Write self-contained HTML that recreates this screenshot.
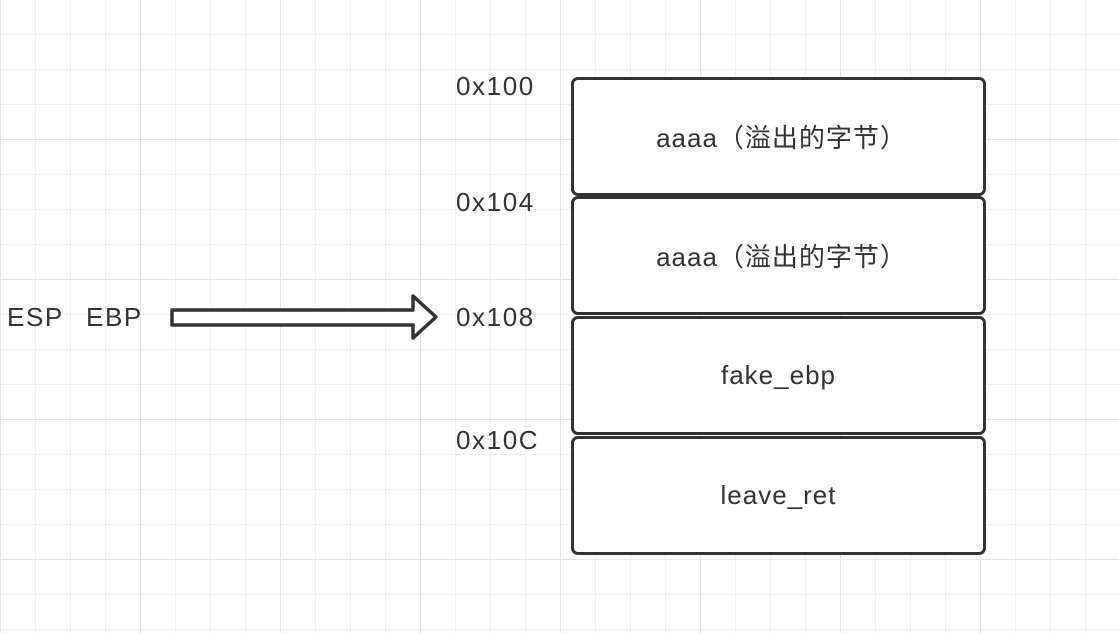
<!DOCTYPE html>
<html><head><meta charset="utf-8"><style>
html,body{margin:0;padding:0}
body{width:1119px;height:633px;overflow:hidden;background:#fff;position:relative;font-family:"Liberation Sans","Noto Sans CJK SC",sans-serif;color:#333;
background-image:
linear-gradient(#e4e4e4 1px,transparent 1px),
linear-gradient(90deg,#e4e4e4 1px,transparent 1px),
linear-gradient(#f0f0f0 1px,transparent 1px),
linear-gradient(90deg,#f0f0f0 1px,transparent 1px);
background-size:140px 140px,140px 140px,35px 35px,35px 35px;
background-position:0 -1px,0 0,0 -1px,0 0;}
.box{position:absolute;left:571px;width:409px;height:113px;border:3px solid #333;border-radius:7px;background:#fff;display:flex;align-items:center;justify-content:center;font-size:26px;color:#333;letter-spacing:1px}
.lbl{position:absolute;font-size:26px;color:#333;letter-spacing:1.6px}
</style></head><body>
<div class="lbl" style="left:456px;top:71px">0x100</div>
<div class="lbl" style="left:456px;top:187px">0x104</div>
<div class="lbl" style="left:456px;top:302px">0x108</div>
<div class="lbl" style="left:456px;top:425px">0x10C</div>
<div class="lbl" style="left:7px;top:302px">ESP</div>
<div class="lbl" style="left:86px;top:302px">EBP</div>
<div class="box" style="top:77px;padding-left:6px;box-sizing:content-box;width:403px">aaaa（溢出的字节）</div>
<div class="box" style="top:196px;padding-left:6px;box-sizing:content-box;width:403px">aaaa（溢出的字节）</div>
<div class="box" style="top:316px">fake_ebp</div>
<div class="box" style="top:436px">leave_ret</div>
<svg style="position:absolute;left:0;top:0" width="1119" height="633">
<path d="M172 310 L413 310 L413 296 L436 317 L413 338 L413 325 L172 325 Z" fill="#fff" stroke="#333" stroke-width="3.5" stroke-linejoin="round"/>
</svg>
</body></html>
